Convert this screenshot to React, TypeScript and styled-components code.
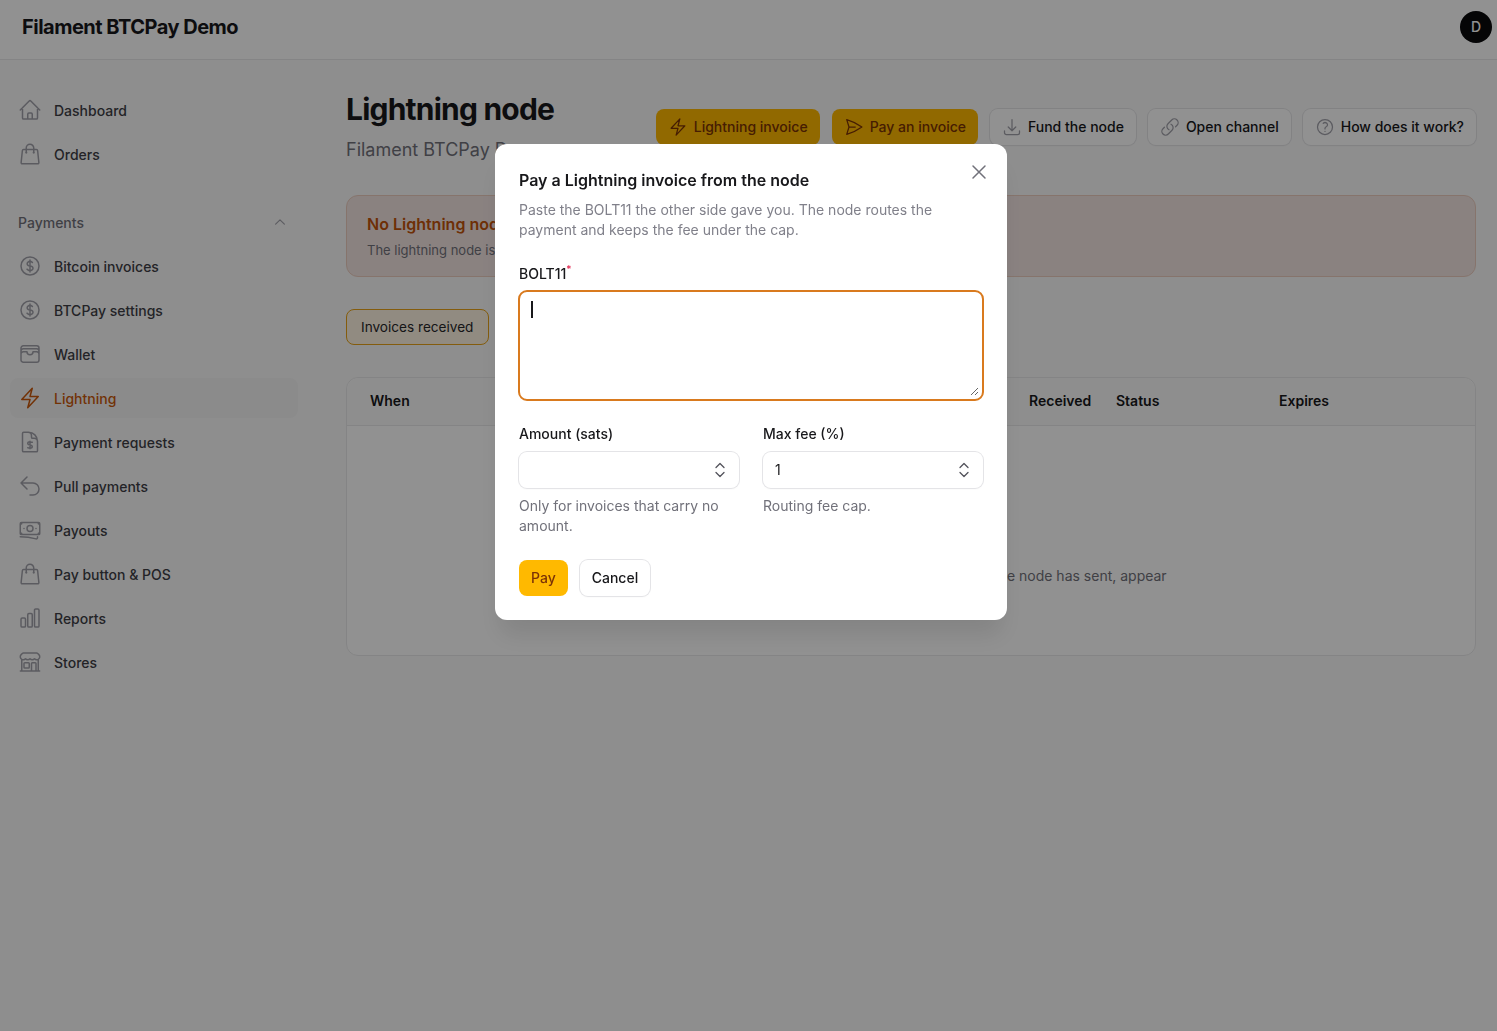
import React from 'react';
import styled, { createGlobalStyle } from 'styled-components';
import {
    HiOutlineArrowDownTray,
    HiOutlineArrowUturnLeft,
    HiOutlineBanknotes,
    HiOutlineBolt,
    HiOutlineBuildingStorefront,
    HiOutlineChartBar,
    HiOutlineChevronUp,
    HiOutlineCurrencyDollar,
    HiOutlineDocumentCurrencyDollar,
    HiOutlineHome,
    HiOutlineLink,
    HiOutlinePaperAirplane,
    HiOutlineQuestionMarkCircle,
    HiOutlineShoppingBag,
    HiOutlineWallet,
    HiOutlineXMark,
} from 'react-icons/hi2';

const GlobalStyle = createGlobalStyle`
    html, body {
        margin: 0;
        height: 100%;
        background: #fafafa;
        font-family: Inter, "Liberation Sans", sans-serif;
        color: #18181b;
    }
    * {
        box-sizing: border-box;
    }
`;

const Page = styled.div`
    min-height: 1031px;
    display: flex;
    flex-direction: column;
`;

const Topbar = styled.header`
    height: 60px;
    flex: none;
    display: flex;
    align-items: center;
    justify-content: space-between;
    padding: 0 5px 6px 22px;
    background: #fff;
    border-bottom: 1px solid #e9e9ea;
`;

const Brand = styled.div`
    font-size: 20px;
    line-height: 28px;
    font-weight: 700;
    letter-spacing: -0.5px;
    color: #18181b;
`;

const Avatar = styled.div`
    width: 32px;
    height: 32px;
    border-radius: 50%;
    background: #09090b;
    color: #fff;
    font-size: 14px;
    font-weight: 500;
    display: flex;
    align-items: center;
    justify-content: center;
`;

const Body = styled.div`
    display: flex;
    flex: 1;
`;

const Sidebar = styled.nav`
    width: 288px;
    margin: 0 10px;
    flex: none;
    padding-top: 30px;
    display: flex;
    flex-direction: column;
`;

const NavGroup = styled.div`
    display: flex;
    flex-direction: column;
    gap: 4px;
`;

const NavHead = styled.div`
    display: flex;
    align-items: center;
    justify-content: space-between;
    height: 40px;
    margin: 28px 0 4px;
    padding: 0 11px 0 8px;
    font-size: 14px;
    font-weight: 500;
    color: #71717a;
    svg {
        width: 14px;
        height: 14px;
        color: #a1a1aa;
        stroke-width: 2;
    }
`;

const NavItem = styled.a<{ $active?: boolean }>`
    height: 40px;
    display: flex;
    align-items: center;
    gap: 12px;
    padding: 0 8px;
    border-radius: 8px;
    font-size: 14px;
    font-weight: 500;
    color: ${(p) => (p.$active ? '#c9590c' : '#3f3f46')};
    background: ${(p) => (p.$active ? '#f5f5f5' : 'transparent')};
    svg {
        width: 24px;
        height: 24px;
        flex: none;
        color: ${(p) => (p.$active ? '#c9590c' : '#a1a1aa')};
    }
`;

const Main = styled.main`
    flex: 1;
    min-width: 0;
    padding: 31px 21px 0 38px;
`;

const PageHeader = styled.div`
    display: flex;
    align-items: flex-start;
    justify-content: space-between;
    height: 73px;
`;

const TitleBlock = styled.div`
    display: flex;
    flex-direction: column;
    gap: 9px;
`;

const Title = styled.h1`
    margin: 0;
    font-size: 30px;
    line-height: 36px;
    font-weight: 700;
    letter-spacing: -0.78px;
    color: #18181b;
`;

const Subtitle = styled.p`
    margin: 0;
    font-size: 18px;
    line-height: 28px;
    color: #71717a;
`;

const Actions = styled.div`
    display: flex;
    gap: 12px;
    margin-top: 18px;
`;

const ActionButton = styled.button<{ $primary?: boolean }>`
    height: 36px;
    display: flex;
    align-items: center;
    gap: 6px;
    padding: 0 12px 1px;
    border: none;
    border-radius: 8px;
    font-family: inherit;
    font-size: 14px;
    font-weight: 500;
    background: ${(p) => (p.$primary ? '#ffb900' : '#fff')};
    color: ${(p) => (p.$primary ? '#7b3306' : '#18181b')};
    box-shadow: ${(p) => (p.$primary ? 'none' : '0 0 0 1px #e4e4e7, 0 1px 2px rgba(0,0,0,.05)')};
    svg {
        width: 20px;
        height: 20px;
        color: ${(p) => (p.$primary ? '#7b3306' : '#a1a1aa')};
    }
`;

const Alert = styled.section`
    height: 82px;
    margin-top: 31px;
    padding: 16px 20px;
    border-radius: 12px;
    border: 1px solid #ebcdbf;
    background: #f3e5e2;
`;

const AlertTitle = styled.div`
    font-size: 16px;
    line-height: 24px;
    font-weight: 600;
    color: #c2530a;
`;

const AlertText = styled.div`
    margin-top: 4px;
    font-size: 13px;
    line-height: 20px;
    color: #71717a;
`;

const Tabs = styled.div`
    display: flex;
    margin-top: 32px;
`;

const Tab = styled.div`
    height: 36px;
    padding: 0 15px 1px 14px;
    display: flex;
    align-items: center;
    border-radius: 8px;
    border: 1px solid #e8a317;
    background: #fff5e3;
    font-size: 13.6px;
    font-weight: 400;
    color: #27272a;
`;

const TableCard = styled.section`
    height: 279px;
    margin-top: 32px;
    border-radius: 12px;
    background: #fff;
    border: 1px solid #e9e9ea;
    display: flex;
    flex-direction: column;
`;

const TableHead = styled.div`
    height: 48px;
    flex: none;
    display: grid;
    grid-template-columns: 659px 87px 163px 1fr;
    align-items: center;
    padding: 0 23px 2px;
    background: #fafafa;
    border-bottom: 1px solid #e9e9ea;
    border-radius: 12px 12px 0 0;
    font-size: 14px;
    font-weight: 600;
    color: #18181b;
`;

const EmptyState = styled.div`
    flex: 1;
    padding: 140px 4px 0 0;
    text-align: center;
    font-size: 14px;
    line-height: 20px;
    color: #71717a;
`;

const Overlay = styled.div`
    position: fixed;
    inset: 0;
    display: flex;
    justify-content: center;
    align-items: flex-start;
    padding: 144px 0 0 5px;
    background: rgba(0, 0, 0, 0.43);
`;

const Modal = styled.div`
    position: relative;
    width: 512px;
    height: 476px;
    padding: 24px;
    border-radius: 12px;
    background: #fff;
    box-shadow: 0 20px 25px -5px rgba(0,0,0,.1);
    display: flex;
    flex-direction: column;
`;

const CloseButton = styled.button`
    position: absolute;
    top: 16px;
    right: 16px;
    width: 24px;
    height: 24px;
    padding: 0;
    border: none;
    background: none;
    color: #71717a;
    svg {
        width: 24px;
        height: 24px;
    }
`;

const ModalTitle = styled.h2`
    margin: 0;
    font-size: 16px;
    line-height: 24px;
    font-weight: 600;
    color: #18181b;
`;

const ModalText = styled.p`
    margin: 8px 0 0;
    font-size: 14px;
    line-height: 20px;
    color: #80808a;
`;

const Label = styled.label`
    display: block;
    font-size: 14px;
    line-height: 20px;
    font-weight: 500;
    color: #18181b;
    sup {
        color: #e11d48;
        font-size: 10px;
        line-height: 0;
    }
`;

const AreaField = styled.div`
    position: relative;
    margin-top: 24px;
    display: flex;
    flex-direction: column;
    gap: 6px;
`;

const AreaFrame = styled.div`
    width: 466px;
    height: 111px;
    margin-left: -1px;
    padding: 3px;
    border: 2px solid #d97a1e;
    border-radius: 9px;
    background: #fff;
`;

const Area = styled.textarea`
    display: block;
    width: 100%;
    height: 101px;
    padding: 4px 8px;
    border: none;
    outline: none;
    background: #fff;
    caret-color: transparent;
`;

const Caret = styled.span`
    position: absolute;
    left: 12px;
    top: 37px;
    width: 2px;
    height: 17px;
    background: #18181b;
`;

const FieldGrid = styled.div`
    display: grid;
    grid-template-columns: 220px 220px;
    gap: 24px;
    margin-top: 23px;
`;

const Field = styled.div`
    display: flex;
    flex-direction: column;
    gap: 8px;
`;

const NumberBox = styled.div`
    height: 36px;
    display: flex;
    align-items: center;
    justify-content: space-between;
    padding: 0 13px 1px 12px;
    border-radius: 8px;
    background: #fff;
    box-shadow: 0 0 0 1px #e4e4e7, 0 1px 2px rgba(0,0,0,.05);
    font-size: 14px;
    color: #18181b;
`;

const Help = styled.div`
    font-size: 14px;
    line-height: 20px;
    color: #71717a;
`;

const ModalActions = styled.div`
    display: flex;
    gap: 12px;
    margin-top: 24px;
`;

const PayButton = styled.button`
    height: 36px;
    padding: 0 12px 2px;
    border: none;
    border-radius: 8px;
    background: #ffb900;
    color: #7b3306;
    font-family: inherit;
    font-size: 14px;
    font-weight: 500;
`;

const CancelButton = styled(PayButton)`
    background: #fff;
    color: #18181b;
    box-shadow: 0 0 0 1px #e4e4e7, 0 1px 2px rgba(0,0,0,.05);
`;

const Stepper = () => (
    <svg width="12" height="16" viewBox="0 0 12 16" fill="none" stroke="#52525b" strokeWidth="1.3" strokeLinecap="round" strokeLinejoin="round">
        <path d="M2 5.5 6 1.5l4 4" />
        <path d="M2 10.5 6 14.5l4-4" />
    </svg>
);

const topNav = [
    { label: 'Dashboard', icon: <HiOutlineHome /> },
    { label: 'Orders', icon: <HiOutlineShoppingBag /> },
];

const paymentNav = [
    { label: 'Bitcoin invoices', icon: <HiOutlineCurrencyDollar /> },
    { label: 'BTCPay settings', icon: <HiOutlineCurrencyDollar /> },
    { label: 'Wallet', icon: <HiOutlineWallet /> },
    { label: 'Lightning', icon: <HiOutlineBolt />, active: true },
    { label: 'Payment requests', icon: <HiOutlineDocumentCurrencyDollar /> },
    { label: 'Pull payments', icon: <HiOutlineArrowUturnLeft /> },
    { label: 'Payouts', icon: <HiOutlineBanknotes /> },
    { label: 'Pay button & POS', icon: <HiOutlineShoppingBag /> },
    { label: 'Reports', icon: <HiOutlineChartBar /> },
    { label: 'Stores', icon: <HiOutlineBuildingStorefront /> },
];

const App = () => {
    return (
        <>
            <GlobalStyle />
            <Page>
                <Topbar>
                    <Brand>Filament BTCPay Demo</Brand>
                    <Avatar>D</Avatar>
                </Topbar>
                <Body>
                    <Sidebar>
                        <NavGroup>
                            {topNav.map((item) => (
                                <NavItem key={item.label}>{item.icon}{item.label}</NavItem>
                            ))}
                        </NavGroup>
                        <NavHead>Payments<HiOutlineChevronUp /></NavHead>
                        <NavGroup>
                            {paymentNav.map((item) => (
                                <NavItem key={item.label} $active={item.active}>{item.icon}{item.label}</NavItem>
                            ))}
                        </NavGroup>
                    </Sidebar>
                    <Main>
                        <PageHeader>
                            <TitleBlock>
                                <Title>Lightning node</Title>
                                <Subtitle>Filament BTCPay Demo</Subtitle>
                            </TitleBlock>
                            <Actions>
                                <ActionButton $primary><HiOutlineBolt />Lightning invoice</ActionButton>
                                <ActionButton $primary><HiOutlinePaperAirplane />Pay an invoice</ActionButton>
                                <ActionButton><HiOutlineArrowDownTray />Fund the node</ActionButton>
                                <ActionButton><HiOutlineLink />Open channel</ActionButton>
                                <ActionButton><HiOutlineQuestionMarkCircle />How does it work?</ActionButton>
                            </Actions>
                        </PageHeader>
                        <Alert>
                            <AlertTitle>No Lightning node</AlertTitle>
                            <AlertText>The lightning node is not reachable</AlertText>
                        </Alert>
                        <Tabs>
                            <Tab>Invoices received</Tab>
                        </Tabs>
                        <TableCard>
                            <TableHead>
                                <span>When</span>
                                <span>Received</span>
                                <span>Status</span>
                                <span>Expires</span>
                            </TableHead>
                            <EmptyState>Invoices this node has received, and payments that the node has sent, appear</EmptyState>
                        </TableCard>
                    </Main>
                </Body>
            </Page>
            <Overlay>
                <Modal>
                    <CloseButton aria-label="Close"><HiOutlineXMark /></CloseButton>
                    <ModalTitle>Pay a Lightning invoice from the node</ModalTitle>
                    <ModalText>Paste the BOLT11 the other side gave you. The node routes the payment and keeps the fee under the cap.</ModalText>
                    <AreaField>
                        <Label>BOLT11<sup>*</sup></Label>
                        <AreaFrame><Area /></AreaFrame>
                        <Caret />
                    </AreaField>
                    <FieldGrid>
                        <Field>
                            <Label>Amount (sats)</Label>
                            <NumberBox><span /><Stepper /></NumberBox>
                            <Help>Only for invoices that carry no amount.</Help>
                        </Field>
                        <Field>
                            <Label>Max fee (%)</Label>
                            <NumberBox><span>1</span><Stepper /></NumberBox>
                            <Help>Routing fee cap.</Help>
                        </Field>
                    </FieldGrid>
                    <ModalActions>
                        <PayButton>Pay</PayButton>
                        <CancelButton>Cancel</CancelButton>
                    </ModalActions>
                </Modal>
            </Overlay>
        </>
    );
};

export default App;
